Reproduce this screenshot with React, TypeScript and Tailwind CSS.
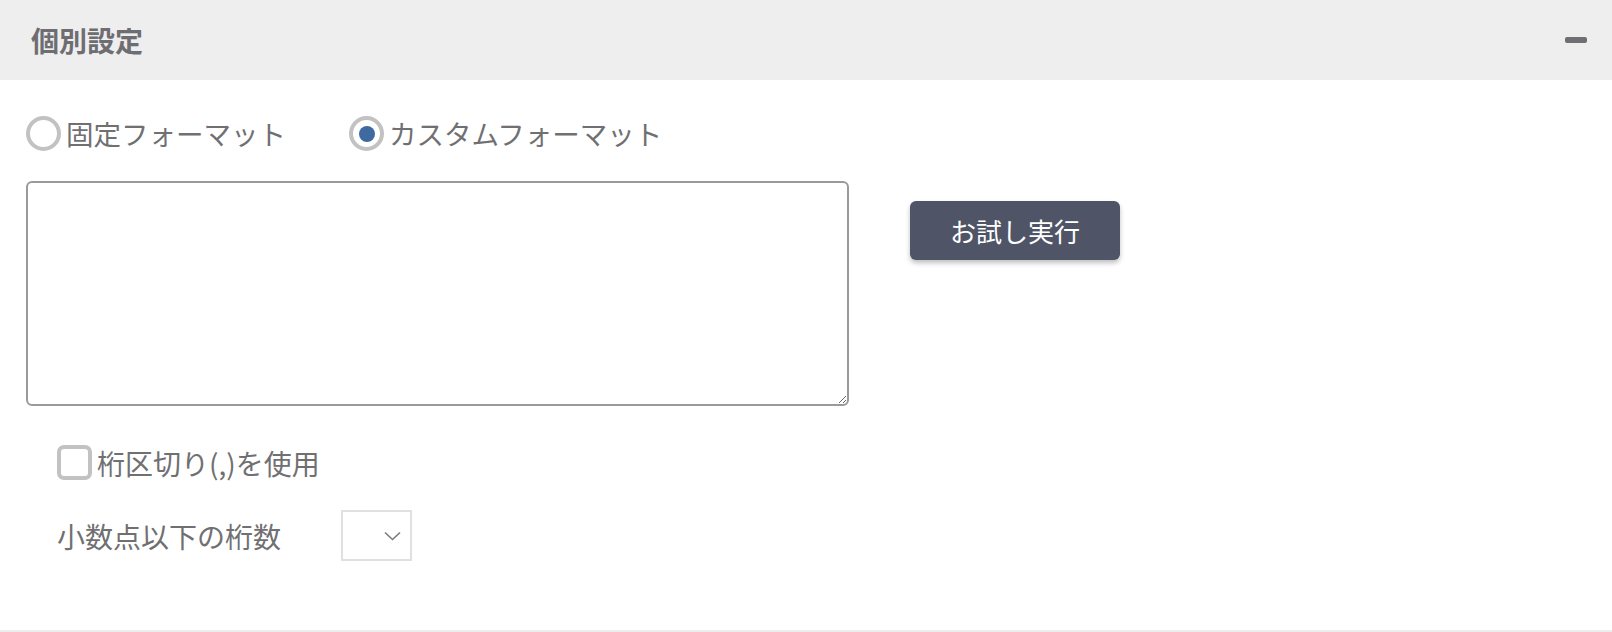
const font = { fontFamily: '"Noto Sans CJK JP", "Noto Sans", sans-serif' }

function Radio({ checked, label }: { checked?: boolean; label: string }) {
  return (
    <label className="flex items-center gap-[5px] cursor-pointer">
      <span className="flex h-[35px] w-[35px] items-center justify-center rounded-full border-[4px] border-[#c2c2c2] bg-white">
        {checked && <span className="h-[16px] w-[16px] rounded-full bg-[#3e69a1]" />}
      </span>
      <span className="text-[27.5px] leading-none text-[#707073]">{label}</span>
    </label>
  )
}

export default function App() {
  return (
    <div className="w-[1612px] h-[632px] bg-white" style={font}>
      <section className="h-full flex flex-col border-b-2 border-[#ececec]">
        <div className="h-[80px] bg-[#eeeeee] flex items-center justify-between pl-[31px] pr-[25px]">
          <h2 className="text-[28px] font-bold text-[#6d6d72]">個別設定</h2>
          <span className="block h-[6px] w-[22px] rounded-[2px] bg-[#6e6e73]" />
        </div>

        <div className="flex flex-col pl-[26px] pt-[36px]">
          <div className="flex items-center gap-[63px]">
            <Radio label="固定フォーマット" />
            <Radio checked label="カスタムフォーマット" />
          </div>

          <div className="flex items-start gap-[61px] mt-[30px]">
            <textarea className="w-[823px] h-[225px] rounded-[6px] border-2 border-[#9a9a9a] outline-none resize" />
            <button className="mt-[20px] w-[210px] h-[59px] rounded-[6px] bg-[#4f5567] text-white text-[26px] shadow-[0_3px_5px_rgba(0,0,0,0.25)]">
              お試し実行
            </button>
          </div>

          <div className="pl-[31px] mt-[39px] flex flex-col gap-[30px]">
            <label className="flex items-center gap-[5px] cursor-pointer">
              <span className="h-[35px] w-[35px] rounded-[7px] border-[4px] border-[#c2c2c2] bg-white" />
              <span className="text-[28px] leading-none text-[#707073]">桁区切り(,)を使用</span>
            </label>

            <div className="flex items-center gap-[60px]">
              <span className="text-[28px] leading-none text-[#707073]">小数点以下の桁数</span>
              <div className="w-[71px] h-[51px] border-2 border-[#e0e0e0] flex items-center justify-end pr-[9px]">
                <svg width="17" height="10" viewBox="0 0 17 10" fill="none">
                  <polyline points="1,1.5 8.5,8.5 16,1.5" stroke="#7a7a7a" strokeWidth="1.6" />
                </svg>
              </div>
            </div>
          </div>
        </div>
      </section>
    </div>
  )
}
